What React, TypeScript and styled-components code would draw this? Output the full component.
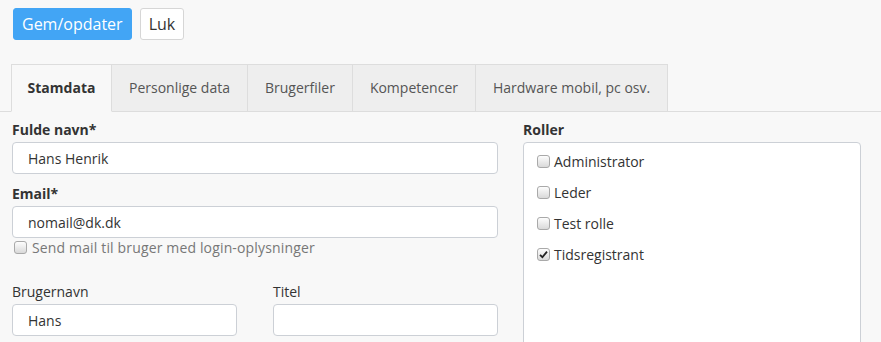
import React from "react";
import styled, { createGlobalStyle } from "styled-components";

const Global = createGlobalStyle`
  html, body { margin: 0; padding: 0; background: #f8f8f8; }
  body {
    font-family: "Open Sans", "Liberation Sans", sans-serif;
    font-size: 14px;
    line-height: 20px;
    color: #333;
  }
  * { box-sizing: border-box; }
`;

const Page = styled.div`
  width: 881px;
  height: 342px;
  overflow: hidden;
  padding-top: 8px;
`;

const Toolbar = styled.div`
  display: flex;
  gap: 8px;
  padding-left: 13px;
  height: 32px;
`;

const Button = styled.button<{ $primary?: boolean }>`
  height: 32px;
  padding: 0 8px;
  font-family: inherit;
  font-size: 16px;
  border-radius: 3px;
  cursor: pointer;
  border: 1px solid ${(p) => (p.$primary ? "#42a5f5" : "#d6d6d6")};
  background: ${(p) => (p.$primary ? "#42a5f5" : "#fff")};
  color: ${(p) => (p.$primary ? "#fff" : "#333")};
`;

const Tabs = styled.div`
  display: flex;
  margin-top: 24px;
  padding-left: 11px;
  border-bottom: 1px solid #ddd;
`;

const Tab = styled.div<{ $active?: boolean }>`
  height: 48px;
  display: flex;
  align-items: center;
  padding: 0 17px;
  margin-bottom: -1px;
  border: 1px solid #ddd;
  border-left: ${(p) => (p.$active ? "1px solid #ddd" : "none")};
  border-bottom: ${(p) => (p.$active ? "1px solid #f8f8f8" : "1px solid #ddd")};
  background: ${(p) => (p.$active ? "#f8f8f8" : "#eee")};
  color: ${(p) => (p.$active ? "#333" : "#555")};
  font-weight: ${(p) => (p.$active ? 700 : 400)};
  font-size: 14px;
  &:first-child { width: 101px; justify-content: center; padding: 0; }
`;

const Form = styled.div`
  display: flex;
  gap: 25px;
  padding: 8px 0 0 12px;
`;

const LeftCol = styled.div`
  width: 486px;
  display: flex;
  flex-direction: column;
`;

const RightCol = styled.div`
  width: 338px;
  display: flex;
  flex-direction: column;
`;

const Field = styled.div<{ $gapTop?: number }>`
  display: flex;
  flex-direction: column;
  gap: 2px;
  margin-top: ${(p) => p.$gapTop ?? 0}px;
`;

const Label = styled.label<{ $bold?: boolean }>`
  font-weight: ${(p) => (p.$bold ? 700 : 400)};
  height: 20px;
  color: #333;
`;

const Input = styled.input`
  height: 32px;
  width: 100%;
  border: 1px solid #ccd0d6;
  border-radius: 4px;
  background: #fff;
  padding: 0 15px;
  font-family: inherit;
  font-size: 14px;
  color: #333;
  outline: none;
`;

const CheckRow = styled.label<{ $muted?: boolean }>`
  display: flex;
  align-items: center;
  gap: ${(p) => (p.$muted ? "5px" : "4px")};
  height: 20px;
  padding-left: ${(p) => (p.$muted ? "2px" : "0")};
  color: ${(p) => (p.$muted ? "#777" : "#333")};
  letter-spacing: ${(p) => (p.$muted ? "0.15px" : "0")};
`;

const Box = styled.span`
  width: 13px;
  height: 13px;
  flex: none;
  border: 1px solid #a9a9a9;
  border-radius: 3px;
  background: linear-gradient(#fdfdfd, #d9d9d9);
  display: flex;
  align-items: center;
  justify-content: center;
  margin-top: -2px;
`;

const Row = styled.div`
  display: flex;
  gap: 36px;
  margin-top: 24px;
  & > * { flex: 1; }
`;

const RoleBox = styled.div`
  margin-top: 2px;
  height: 230px;
  background: #fff;
  border: 1px solid #ccd0d6;
  border-radius: 4px;
  padding: 9px 0 0 13px;
  display: flex;
  flex-direction: column;
  gap: 11px;
`;

const Check = ({ checked }: { checked?: boolean }) => (
  <Box>
    {checked && (
      <svg width="9" height="9" viewBox="0 0 9 9">
        <path d="M1 4.8 L3.4 7.2 L8 1.6" fill="none" stroke="#222" strokeWidth="1.8" />
      </svg>
    )}
  </Box>
);

const roles = [
  { name: "Administrator", checked: false },
  { name: "Leder", checked: false },
  { name: "Test rolle", checked: false },
  { name: "Tidsregistrant", checked: true },
];

export default function App() {
  return (
    <Page>
      <Global />
      <Toolbar>
        <Button $primary>Gem/opdater</Button>
        <Button>Luk</Button>
      </Toolbar>
      <Tabs>
        <Tab $active>Stamdata</Tab>
        <Tab>Personlige data</Tab>
        <Tab>Brugerfiler</Tab>
        <Tab>Kompetencer</Tab>
        <Tab>Hardware mobil, pc osv.</Tab>
      </Tabs>
      <Form>
        <LeftCol>
          <Field>
            <Label $bold>Fulde navn*</Label>
            <Input defaultValue="Hans Henrik" />
          </Field>
          <Field $gapTop={10}>
            <Label $bold>Email*</Label>
            <Input defaultValue="nomail@dk.dk" />
          </Field>
          <CheckRow $muted>
            <Check />
            Send mail til bruger med login-oplysninger
          </CheckRow>
          <Row>
            <Field>
              <Label>Brugernavn</Label>
              <Input defaultValue="Hans" />
            </Field>
            <Field>
              <Label>Titel</Label>
              <Input defaultValue="" />
            </Field>
          </Row>
        </LeftCol>
        <RightCol>
          <Label $bold>Roller</Label>
          <RoleBox>
            {roles.map((r) => (
              <CheckRow key={r.name}>
                <Check checked={r.checked} />
                {r.name}
              </CheckRow>
            ))}
          </RoleBox>
        </RightCol>
      </Form>
    </Page>
  );
}
